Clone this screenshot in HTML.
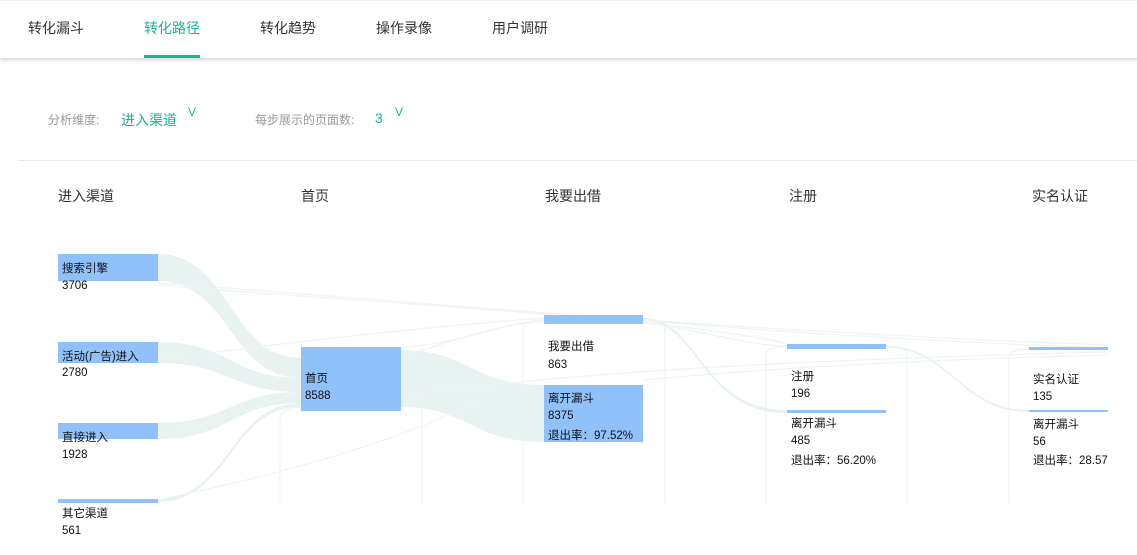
<!DOCTYPE html>
<html><head><meta charset="utf-8">
<style>
html,body{margin:0;padding:0;background:#fff;width:1137px;height:555px;overflow:hidden;font-family:"Liberation Sans","Noto Sans CJK SC",sans-serif;}
.nav{position:absolute;left:0;top:0;width:1137px;height:57px;background:#fff;box-shadow:0 2px 3px rgba(0,0,0,0.12);border-bottom:1px solid #ddd;border-top:1px solid #f0f0f3;}
.tab{position:absolute;top:17px;font-size:14px;color:#333;}
.tab.act{color:#17b39b;}
.ul{position:absolute;left:144px;top:54px;width:56px;height:3px;background:#17b39b;}
.f{position:absolute;font-size:12px;color:#999;}
.g{position:absolute;color:#17b39b;}
.sep{position:absolute;left:18px;top:160px;width:1119px;height:1px;background:#e8ebee;}
.h{position:absolute;top:186px;font-size:14px;color:#333;}
</style></head><body>
<div class="nav">
<span class="tab" style="left:28px">转化漏斗</span>
<span class="tab act" style="left:144px">转化路径</span>
<span class="tab" style="left:260px">转化趋势</span>
<span class="tab" style="left:376px">操作录像</span>
<span class="tab" style="left:492px">用户调研</span>
<div class="ul"></div>
</div>
<span class="f" style="left:48px;top:111px">分析维度:</span>
<span class="g" style="left:121px;top:110px;font-size:14px">进入渠道</span>
<span class="g" style="left:188px;top:105px;font-size:12px">V</span>
<span class="f" style="left:255px;top:111px">每步展示的页面数:</span>
<span class="g" style="left:375px;top:110px;font-size:14px">3</span>
<span class="g" style="left:395px;top:105px;font-size:12px">V</span>
<div class="sep"></div>
<span class="h" style="left:58px">进入渠道</span>
<span class="h" style="left:301px">首页</span>
<span class="h" style="left:545px">我要出借</span>
<span class="h" style="left:789px">注册</span>
<span class="h" style="left:1032px">实名认证</span>

<svg style="position:absolute;left:0;top:0" width="1137" height="555" font-family="Liberation Sans,Noto Sans CJK SC,sans-serif" font-size="11.5">
<defs><clipPath id="c"><rect x="0" y="0" width="1108" height="555"/></clipPath></defs>
<g clip-path="url(#c)">
<g fill="#e6f1ef" opacity="0.9">
<path d="M158,254 C230,254 230,358 301,358 L301,378 C230,378 230,281 158,281Z"/>
<path d="M158,342 C230,342 230,378 301,378 L301,392 C230,392 230,363 158,363Z"/>
<path d="M158,423 C230,423 230,392 301,392 L301,403 C230,403 230,439 158,439Z"/>
<path d="M158,499 C230,499 230,403 301,403 L301,407 C230,407 230,502 158,502Z"/>
<path d="M400,350 C470,350 470,385 544,385 L544,442 C470,442 470,407 400,407Z"/>
<path d="M643,318 C700,318 700,410 787,410 L787,413 C700,413 700,321 643,321Z"/>
<path d="M886,346 C950,346 960,410 1029,410 L1029,412 C960,412 950,348 886,348Z"/>
</g>
<g stroke="#edf4f3" fill="none" stroke-width="1.2">
<path d="M158,283 C400,300 700,330 1108,345"/>
<path d="M158,285 C400,305 700,320 787,344"/>
<path d="M158,360 C300,340 450,325 544,318"/>
<path d="M158,437 C300,400 450,330 544,320"/>
<path d="M400,348 C480,340 500,322 544,322"/>
<path d="M643,320 C750,330 900,340 1108,348"/>
<path d="M643,322 C700,330 750,346 787,346"/>
<path d="M643,380 C750,370 900,360 1108,355"/>
<path d="M400,395 C600,370 800,360 1108,352"/>
<path d="M280,503 L280,420 C280,410 290,407 301,407"/>
<path d="M523,503 L523,330 C523,322 533,320 544,320"/>
<path d="M766,503 L766,355 C766,348 776,347 787,347"/>
<path d="M1009,503 L1009,358 C1009,350 1019,349 1029,349"/>
<path d="M422,503 L422,410"/>
<path d="M665,503 L665,330 C665,322 655,320 643,320"/>
<path d="M907,503 L907,355 C907,348 897,347 886,347"/>
<path d="M158,500 C300,470 400,440 480,400" stroke-width="1"/>
</g>
<g fill="#90c1fb">
<rect x="58" y="254" width="100" height="27"/>
<rect x="58" y="342" width="100" height="21"/>
<rect x="58" y="423" width="100" height="16"/>
<rect x="58" y="499" width="100" height="4"/>
<rect x="301" y="347" width="100" height="64"/>
<rect x="544" y="315" width="99" height="9"/>
<rect x="544" y="385" width="99" height="57"/>
<rect x="787" y="344" width="99" height="5"/>
<rect x="787" y="410" width="99" height="3"/>
<rect x="1029" y="347" width="79" height="3"/>
<rect x="1029" y="410" width="79" height="2"/>
</g>
<g fill="#111">
<text x="62" y="272">搜索引擎</text><text x="62" y="289">3706</text>
<text x="62" y="360">活动(广告)进入</text><text x="62" y="376">2780</text>
<text x="62" y="441">直接进入</text><text x="62" y="458">1928</text>
<text x="62" y="517">其它渠道</text><text x="62" y="534">561</text>
<text x="305" y="382">首页</text><text x="305" y="399">8588</text>
<text x="548" y="350">我要出借</text><text x="548" y="368">863</text>
<text x="548" y="402">离开漏斗</text><text x="548" y="419">8375</text><text x="548" y="439">退出率：97.52%</text>
<text x="791" y="380">注册</text><text x="791" y="397">196</text>
<text x="791" y="427">离开漏斗</text><text x="791" y="444">485</text><text x="791" y="464">退出率：56.20%</text>
<text x="1033" y="383">实名认证</text><text x="1033" y="400">135</text>
<text x="1033" y="428">离开漏斗</text><text x="1033" y="445">56</text><text x="1033" y="464">退出率：28.57%</text>
</g>
</g>
</svg>
</body></html>
